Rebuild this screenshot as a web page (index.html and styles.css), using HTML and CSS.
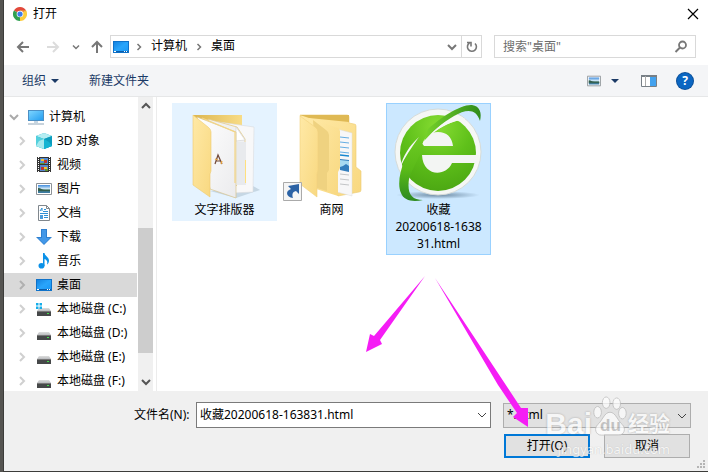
FILE: index.html
```html
<!DOCTYPE html>
<html lang="zh-CN">
<head>
<meta charset="utf-8">
<meta name="viewport" content="width=device-width, initial-scale=1">
<title>打开</title>
<link rel="stylesheet" href="styles.css">
</head>
<body>
<svg class="defs" aria-hidden="true">
  <defs>
    <linearGradient id="blue" x1="0" y1="0" x2="1" y2="1"><stop offset="0" stop-color="#1583e0"/><stop offset=".5" stop-color="#29a5fb"/><stop offset="1" stop-color="#1b98f5"/></linearGradient>
    <linearGradient id="screen" x1="0" y1="0" x2="1" y2="1"><stop offset="0" stop-color="#7cd4ff"/><stop offset="1" stop-color="#259ef0"/></linearGradient>
    <linearGradient id="sky" x1="0" y1="0" x2="0" y2="1"><stop offset="0" stop-color="#3f8bdd"/><stop offset=".5" stop-color="#dff1fa"/><stop offset=".6" stop-color="#3e6f62"/><stop offset="1" stop-color="#3d7fb0"/></linearGradient>
    <linearGradient id="fold" x1="0" y1="0" x2="1" y2="1"><stop offset="0" stop-color="#ffe9a6"/><stop offset="1" stop-color="#f8d880"/></linearGradient>
    <linearGradient id="back" x1="0" y1="0" x2="1" y2="0"><stop offset="0" stop-color="#dcb550"/><stop offset="1" stop-color="#f8dc86"/></linearGradient>
    <linearGradient id="paper" x1="0" y1="0" x2="1" y2="1"><stop offset="0" stop-color="#ffffff"/><stop offset="1" stop-color="#ebebed"/></linearGradient>
    <radialGradient id="green" cx=".5" cy=".15" r=".9"><stop offset="0" stop-color="#86dc32"/><stop offset=".5" stop-color="#5fc01a"/><stop offset="1" stop-color="#4aa512"/></radialGradient>
    <linearGradient id="tip" x1="0" y1="0" x2="1" y2="0"><stop offset="0" stop-color="#78d42a"/><stop offset="1" stop-color="#2f8c1c"/></linearGradient>
    <linearGradient id="blade" x1="0" y1="0" x2="0" y2="1"><stop offset="0" stop-color="#6cca22"/><stop offset=".5" stop-color="#5aba18"/><stop offset="1" stop-color="#2d8a20"/></linearGradient>
    <radialGradient id="shade"><stop offset="0" stop-color="#4e6c86" stop-opacity=".75"/><stop offset="1" stop-color="#4e6c86" stop-opacity="0"/></radialGradient>
    <linearGradient id="drivetop" x1="0" y1="0" x2="0" y2="1"><stop offset="0" stop-color="#dedede"/><stop offset="1" stop-color="#b9bbbe"/></linearGradient>
  </defs>
  <symbol id="chev" viewBox="0 0 16 16"><path d="M6 4l4 4-4 4" fill="none" stroke="currentColor" stroke-width="2"/></symbol>
  <symbol id="down" viewBox="0 0 16 16"><path d="M4 6l4 4 4-4" fill="none" stroke="currentColor" stroke-width="2"/></symbol>
  <symbol id="desk" viewBox="0 0 16 16"><path d="M0 2h16v12H0z" fill="#0f72c9"/><path d="M1 3h14v10H1z" fill="url(#blue)"/><path d="M1 12.500h14" stroke="#0d5ca8"/><path d="M1 12.500h2m8 0h1m1 0h1" stroke="#fff"/></symbol>
  <symbol id="photo" viewBox="0 0 16 16"><path d="M.5 2.500h15v11H.5z" fill="#fff" stroke="#8d9297"/><path d="M2 4h12v8H2z" fill="url(#sky)"/><path d="M2 7c3 0 4 2 7 2h5v1H2z" fill="#335d4b"/></symbol>
  <symbol id="drive" viewBox="0 0 16 16"><path d="M3 7h10l2 3H1z" fill="url(#drivetop)"/><path d="M1 10h14v5H1z" fill="#464849"/><path d="M1 10.500h14" stroke="#777"/><path d="M11 12h2v1h-2z" fill="#45df4d"/></symbol>
</svg>

<main class="window">
  <header class="title">
    <svg class="chrome" viewBox="0 0 16 16" aria-hidden="true"><path d="M8 8L1.070 4A8 8 0 0 1 14.930 4z" fill="#e2493b"/><path d="M8 8l6.930-4A8 8 0 0 1 8 16z" fill="#fccd3d"/><path d="M8 8v8A8 8 0 0 1 1.070 4z" fill="#30a050"/><path d="M8 4h6.930l.5 1H8z" fill="#f2b83a"/><circle cx="8" cy="8" r="3.800" fill="#fff"/><circle cx="8" cy="8" r="3" fill="#3d7eea"/></svg>
    <h1>打开</h1>
    <button class="plain close" aria-label="关闭"><svg viewBox="0 0 12 12"><path d="M1 1l10 10M11 1L1 11" fill="none" stroke="#000" stroke-width="1.200"/></svg></button>
  </header>

  <nav class="address-row" aria-label="地址">
    <button class="plain nav" aria-label="后退"><svg viewBox="0 0 16 16"><path d="M14 8H3M8 3L3 8l5 5" fill="none" stroke="#777" stroke-width="2"/></svg></button>
    <button class="plain nav forward" aria-label="前进"><svg viewBox="0 0 16 16"><path d="M2 8h11M8 3l5 5-5 5" fill="none" stroke="#dcdcdc" stroke-width="2"/></svg></button>
    <button class="plain recent" aria-label="最近"><svg viewBox="0 0 16 16"><use href="#down"/></svg></button>
    <button class="plain nav" aria-label="上移"><svg viewBox="0 0 16 16"><path d="M8 14V3M3 8l5-5 5 5" fill="none" stroke="#777" stroke-width="2"/></svg></button>
    <div class="address">
      <svg class="icon" viewBox="0 0 16 16" aria-hidden="true"><use href="#desk"/></svg>
      <svg class="sep" viewBox="0 0 16 16" aria-hidden="true"><use href="#chev"/></svg>
      <a href="#computer">计算机</a>
      <svg class="sep" viewBox="0 0 16 16" aria-hidden="true"><use href="#chev"/></svg>
      <a href="#desktop">桌面</a>
      <button class="plain history" aria-label="历史"><svg viewBox="0 0 16 16"><use href="#down"/></svg></button>
      <button class="plain refresh" aria-label="刷新"><svg viewBox="0 0 16 16"><path d="M11 4.500A4.500 4.500 0 1 1 5.500 4M3 3.500h4v4" fill="none" stroke="#777" stroke-width="1.600"/></svg></button>
    </div>
    <div class="search">
      <input type="search" aria-label="搜索" placeholder="搜索&quot;桌面&quot;">
      <svg viewBox="0 0 16 16" aria-hidden="true"><circle cx="9.500" cy="6" r="3.500" fill="none" stroke="#777" stroke-width="1.800"/><path d="M7 8.500L2.500 13" stroke="#777" stroke-width="2"/></svg>
    </div>
  </nav>

  <div class="toolbar">
    <button class="plain organize">组织 <svg viewBox="0 0 8 4" aria-hidden="true"><path d="M0 0h8L4 4z" fill="#1b3a66"/></svg></button>
    <button class="plain">新建文件夹</button>
    <span class="tools">
      <button class="plain view" aria-label="更改视图"><svg class="view-icon" viewBox="0 0 16 16"><use href="#photo"/></svg><svg class="caret" viewBox="0 0 8 4"><path d="M0 0h8L4 4z" fill="#1b3a66"/></svg></button>
      <button class="plain" aria-label="预览窗格"><svg viewBox="0 0 16 16"><path d="M.5 2.500h15v11H.5z" fill="#fff" stroke="#777f86"/><path d="M0 2h16v2H0z" fill="#777f86"/><path d="M4.500 3v10" stroke="#aaa"/><path d="M9 4h6v9H9z" fill="#43a2ef"/></svg></button>
      <button class="plain" aria-label="帮助"><span class="help">?</span></button>
    </span>
  </div>

  <div class="content">
    <nav class="tree" aria-label="文件夹">
      <a class="root" href="#computer"><svg class="arrow" viewBox="0 0 16 16"><use href="#down"/></svg><svg class="icon" viewBox="0 0 16 16"><path d="M0 1h16v11H0z" fill="#4c8fc4"/><path d="M1 2h14v9H1z" fill="url(#screen)"/><path d="M6 12h4v2H6z" fill="#c7d6e2"/><path d="M0 15h16" stroke="#8fa6b9"/></svg>计算机</a>
      <a href="#objects"><svg class="arrow" viewBox="0 0 16 16"><use href="#chev"/></svg><svg class="icon" viewBox="0 0 16 16"><path d="M0 3l8-3 8 3v10l-8 3-8-3z" fill="#20b6cf"/><path d="M0 3l8-3 8 3-8 3z" fill="#b5edf2"/><path d="M0 3l8 3v10l-8-3z" fill="#53d0dd"/><path d="M8 6l8-3v10l-8 3z" fill="#0c9cbd"/><path d="M3 8l5-2v10l-8-3z" fill="#a5e9ee"/><path d="M8 6l5 3 3 4-8 3z" fill="#13b4d2"/></svg>3D 对象</a>
      <a href="#videos"><svg class="arrow" viewBox="0 0 16 16"><use href="#chev"/></svg><svg class="icon" viewBox="0 0 16 16"><path d="M1 0h14v15H1z" fill="#333"/><path d="M2.500 0v15M13.500 0v15" stroke="#fff" stroke-dasharray="1 1"/><path d="M4 1h8v6H4z" fill="#518bd1"/><path d="M4 8h8v6H4z" fill="#5587ce"/><path d="M5 2h3v2H5zm3 8h3v2H8z" fill="#f0c12f"/><path d="M8 3h3v3H8zM5 10h3v3H5z" fill="#be3432"/><path d="M4 6h5v1H4zm5 6h3v2H9z" fill="#5f9433"/></svg>视频</a>
      <a href="#pictures"><svg class="arrow" viewBox="0 0 16 16"><use href="#chev"/></svg><svg class="icon" viewBox="0 0 16 16"><use href="#photo"/></svg>图片</a>
      <a href="#documents"><svg class="arrow" viewBox="0 0 16 16"><use href="#chev"/></svg><svg class="icon" viewBox="0 0 16 16"><path d="M2.500.5h8l3 3v12h-11z" fill="#fff" stroke="#80878d"/><path d="M10.500.5v3h3" fill="none" stroke="#80878d"/><path d="M4 6l2-3v3m2-1.500h2M7 6.500h5M4 8.500h8m-4 2h4m-4 2h4" fill="none" stroke="#2f90d5"/><path d="M4 10h3v4H4z" fill="#4a9cdb"/></svg>文档</a>
      <a href="#downloads"><svg class="arrow" viewBox="0 0 16 16"><use href="#chev"/></svg><svg class="icon" viewBox="0 0 16 16"><path d="M5 0h6v8h5l-8 8-8-8h5z" fill="#2f80d0"/><path d="M6 1h4v8h4l-6 6-6-6h4z" fill="#4398e8"/></svg>下载</a>
      <a href="#music"><svg class="arrow" viewBox="0 0 16 16"><use href="#chev"/></svg><svg class="icon" viewBox="0 0 16 16"><ellipse cx="5.500" cy="12.700" rx="3" ry="2.800" fill="#0b91e8"/><path d="M7 0h1.500c.3 3 4.500 4 4.500 7.500 0 2-1 3.500-2 4 .8-3 0-4.500-2.500-5.500v7H7z" fill="#0b91e8"/></svg>音乐</a>
      <a class="selected" href="#desktop" aria-current="page"><svg class="arrow" viewBox="0 0 16 16"><use href="#chev"/></svg><svg class="icon" viewBox="0 0 16 16"><use href="#desk"/></svg>桌面</a>
      <a href="#c"><svg class="arrow" viewBox="0 0 16 16"><use href="#chev"/></svg><svg class="icon" viewBox="0 0 16 16"><use href="#drive"/><path d="M0 2h2.500v2.500H0zm3.500 0H6v2.500H3.500zM0 5.500h2.500V8H0zm3.500 0H6V8H3.500z" fill="#16aeea"/></svg>本地磁盘 (C:)</a>
      <a href="#d"><svg class="arrow" viewBox="0 0 16 16"><use href="#chev"/></svg><svg class="icon" viewBox="0 0 16 16"><use href="#drive"/></svg>本地磁盘 (D:)</a>
      <a href="#e"><svg class="arrow" viewBox="0 0 16 16"><use href="#chev"/></svg><svg class="icon" viewBox="0 0 16 16"><use href="#drive"/></svg>本地磁盘 (E:)</a>
      <a href="#f"><svg class="arrow" viewBox="0 0 16 16"><use href="#chev"/></svg><svg class="icon" viewBox="0 0 16 16"><use href="#drive"/></svg>本地磁盘 (F:)</a>
    </nav>
    <div class="scrollbar">
      <button class="plain" aria-label="向上滚动"><svg viewBox="0 0 16 16"><path d="M4 10l4-4 4 4" fill="none" stroke="#555" stroke-width="2"/></svg></button>
      <span class="track"></span>
      <span class="thumb"></span>
      <span class="track end"></span>
      <button class="plain" aria-label="向下滚动"><svg viewBox="0 0 16 16"><use href="#down"/></svg></button>
    </div>
    <section class="files" aria-label="文件">
      <button class="file hover">
        <svg viewBox="0 0 105 98" aria-hidden="true">
          <path d="M38 88l26 7 24-8-7-4z" fill="#8ca2b3" opacity=".35"/>
          <path d="M21 12h49v62H30z" fill="url(#back)"/>
          <path d="M33 17l49 7-1 65-20 1z" fill="#f8f8f9" stroke="#dadcdf" stroke-width=".6"/>
          <path d="M36 16l29 8 8 12v38l-9 9z" fill="#f0f1f3" stroke="#e4ca86" stroke-width=".8"/>
          <path d="M64 24l9 13-9 1z" fill="#fff" stroke="#d0d0d0" stroke-width=".6"/>
          <path d="M65 39h9v43h-9z" fill="#e8eaed"/><path d="M73.500 57v23" stroke="#ffe07e"/>
          <path d="M25 14l39 15v66l-26-9z" fill="url(#paper)" stroke="#d9c48d" stroke-width=".7"/>
          <path d="M30 15l33 14v51" fill="none" stroke="#f3d584" stroke-width="1.200"/>
          <path d="M43 61l3-9 4 9m-6-3h5" fill="none" stroke="#714838" stroke-width="1.200"/><path d="M43 56l3 1m3 4l1-3" stroke="#e6a03b" stroke-width="1.200"/>
          <path d="M21 12l15 12q3 2 3 5v39l-1 3v23L21 82z" fill="url(#fold)" stroke="#efcb70" stroke-width=".6"/>
        </svg>
        <span>文字排版器</span>
      </button>
      <button class="file">
        <svg viewBox="0 0 105 98" aria-hidden="true">
          <path d="M21 12h47q2 0 2 2v6l5 1q2 0 2 2v41l5 4v19q0 2-2 2l-21 4z" fill="url(#fold)" stroke="#edcb70" stroke-width=".6"/>
          <path d="M21 12h49v7L30 15z" fill="#dfb954"/>
          <path d="M58 26l15 4v63l-15-4z" fill="#f7f7f8" stroke="#ddd" stroke-width=".5"/>
          <path d="M61 34l9 1m-9 4l9 1m-9 4l9 1m-9 4l9 1" stroke="#64ade3"/><path d="M61 52l9 1" stroke="#1888d0" stroke-width="1.400"/>
          <path d="M61 56l9 1v12l-9-2z" fill="#337ebd"/><path d="M61 57l9 1v5l-3-2-3 2-3 1z" fill="#a7daf1"/>
          <path d="M61 71l9 1m-9 4l9 1m-9 4l9 1" stroke="#b5b7ba" stroke-width=".8"/>
          <path d="M30 15l29 10q2 1 2 3v37l-2 4v24l-22-7z" fill="url(#fold)"/>
          <path d="M34 17l13 10q3 2 3 5v35l-2 3v18l-10-3z" fill="#efd280"/>
          <path d="M21 13l15 11q3 2 3 5v38l-1 4v23L21 81z" fill="url(#fold)" stroke="#f2d27d" stroke-width=".6"/>
          <path d="M4.500 79.500h18v18h-18z" fill="#f5f5f5" stroke="#aaa"/><path d="M9 83l11-2v10l-3-3c-4 1-4 4-3 7-7-1-8-7-2-9z" fill="#2b62a5"/>
        </svg>
        <span>商网</span>
      </button>
      <button class="file chosen">
        <svg viewBox="0 0 105 98" aria-hidden="true">
          <ellipse cx="52" cy="92" rx="42" ry="4" fill="url(#shade)"/>
          <circle cx="52" cy="49" r="43" fill="#f5f7f5" stroke="#d7dcd9"/>
          <circle cx="52" cy="50" r="38" fill="url(#green)"/>
          <path d="M36 43Q39 29 52 29Q65 29 67 43zM36 52H93V60H66C60 74 37 74 36 52z" fill="#f3f5f3"/>
          <path d="M36 43C38 34 55 17 69 10L79 16C65 18 55 24 47 30L40 38z" fill="#f5f7f5"/>
          <path d="M42 26C54 15 75 1 86 2C94 3 96 10 94 18C90 5 80 6 68 13C56 20 46 29 38 38z" fill="url(#tip)"/>
          <path d="M45 31C53 23 64 15 74 13L79 16C65 18 55 24 47 30z" fill="#f5f7f5"/>
          <path d="M32 35C19 50 9 77 15 90C18 98 27 99 37 97C25 97 21 90 23 76L26 68L38 43z" fill="url(#blade)"/>
          <path d="M33 34C23 43 17 53 14 65C19 54 25 45 33 34z" fill="#f5f7f5"/>
        </svg>
        <span>收藏<br>20200618-163831.html</span>
      </button>
    </section>
  </div>

  <form class="footer">
    <div class="fields">
      <label for="filename">文件名(N):</label>
      <div class="combo"><input id="filename" type="text" value="收藏20200618-163831.html"><button class="plain" type="button" aria-label="以前的文件名"><svg viewBox="0 0 16 16"><path d="M4 6l4 4 4-4" fill="none" stroke="#444"/></svg></button></div>
      <div class="type"><select aria-label="文件类型"><option>*.html</option></select><svg viewBox="0 0 16 16" aria-hidden="true"><path d="M4 6l4 4 4-4" fill="none" stroke="#444"/></svg></div>
    </div>
    <div class="actions">
      <button class="action primary" type="button">打开(O)</button>
      <button class="action" type="button">取消</button>
    </div>
    <svg class="grip" viewBox="0 0 8 8" aria-hidden="true"><path d="M6 0h2v2H6zM3 3h2v2H3zm3 0h2v2H6zM0 6h2v2H0zm3 0h2v2H3zm3 0h2v2H6z" fill="#b5b5b5"/></svg>
  </form>

  <svg class="pointers" viewBox="0 0 170 160" aria-hidden="true"><path d="M65 6L20 70l2 4-16 8 4-18 4 2zM75 8l86 130h7l0 19-15-10 4-4L138 115z" fill="#f51df5"/></svg>
  <div class="watermark">
    <div class="brand"><span>Bai</span><span class="paw"><svg viewBox="0 0 36 44" aria-hidden="true"><g fill="#fff" stroke="#b8b8b8" stroke-width="1"><ellipse cx="5" cy="17" rx="4" ry="6"/><ellipse cx="14" cy="7" rx="4" ry="6"/><ellipse cx="25" cy="8" rx="4" ry="6"/><ellipse cx="31" cy="18" rx="4" ry="6"/><path d="M18 17c6 0 8 9 13 13 4 4 2 11-4 11H9c-6 0-8-7-4-11 5-4 7-13 13-13z"/></g></svg><b>du</b></span><span class="zh">经验</span></div>
    <small>jingyan.baidu.com</small>
  </div>
</main>
</body>
</html>
```
FILE: styles.css
```css
* { box-sizing: border-box; }
body { margin: 0; font: 12px/16px "Noto Sans", "Noto Sans CJK SC", sans-serif; color: #000; background: #555451; }
svg { display: block; width: 16px; height: 16px; flex: none; }
a { color: inherit; text-decoration: none; }
button, input, select { font: inherit; color: inherit; margin: 0; }
.defs { position: absolute; width: 0; height: 0; }
.plain { display: flex; align-items: center; justify-content: center; padding: 0; border: 0; background: none; }

.window { position: relative; display: flex; flex-direction: column; height: 100vh; margin-left: 3px; border-left: 1px solid #3c3c3a; border-bottom: 1px solid #3c3c3a; background: #fff; }

.title { display: flex; align-items: center; height: 28px; padding: 0 9px; gap: 6px; }
.title h1 { flex: 1; margin: 0; font-size: 12px; font-weight: 400; }
.chrome { width: 14px; height: 14px; }
.close svg { width: 12px; height: 12px; }

.address-row { display: flex; align-items: center; padding: 7px 12px 7px 11px; }
.nav { width: 16px; }
.forward { margin-left: 14px; }
.recent { margin: 0 5px 0 7px; color: #777; }
.recent svg { width: 12px; height: 12px; margin: 0 2px; }
.address { display: flex; flex: 1; align-items: center; height: 23px; margin-left: 5px; padding-left: 2px; border: 1px solid #d9d9d9; }
.address a { padding-bottom: 2px; }
.sep { width: 12px; height: 12px; margin: 0 6px 0 4px; color: #777; }
.address .icon + .sep + a { margin-right: 2px; }
.history { width: 18px; margin-left: auto; color: #777; }
.refresh { width: 20px; height: 21px; border-left: 1px solid #d9d9d9; }
.search { display: flex; align-items: center; width: 202px; height: 23px; margin-left: 12px; padding: 0 6px 0 8px; border: 1px solid #d9d9d9; }
.search input { flex: 1; min-width: 0; padding: 0; border: 0; outline: 0; background: none; }
.search input::placeholder { color: #6d6d6d; opacity: 1; }

.toolbar { display: flex; align-items: center; height: 32px; padding: 0 15px 0 18px; gap: 30px; border-bottom: 1px solid #e6e7e8; background: #f4f5f7; color: #1b3a66; }
.organize { gap: 5px; }
.organize svg, .caret { width: 8px; height: 4px; }
.tools { display: flex; align-items: center; gap: 20px; margin-left: auto; }
.view { gap: 10px; margin-right: 2px; }
.view-icon { width: 14px; height: 14px; }
.help { width: 16px; height: 16px; border-radius: 8px; background: #0b66c2; box-shadow: 0 0 0 1px #0b4f98; color: #fff; font-weight: 700; }

.content { display: flex; flex: 1; min-height: 0; }
.tree { width: 133px; padding-top: 8px; overflow: hidden; }
.tree a { display: flex; align-items: center; height: 24px; padding-left: 10px; white-space: nowrap; }
.tree .root { padding-left: 2px; }
.tree .arrow { margin-right: 6px; color: #d0d0d0; }
.tree .root .arrow { color: #aaa; }
.tree .icon { margin-right: 5px; }
.tree .selected { background: #d9d9d9; }
.tree .selected .arrow { color: #b0b0b0; }
.scrollbar { display: flex; flex-direction: column; width: 20px; padding: 0 3px 0 1px; border-right: 1px solid #ececec; background: #f0f0f0 content-box; color: #555; }
.scrollbar button { height: 18px; }
.track { flex: 113; }
.track.end { flex: 20; }
.thumb { flex: 125; background: #cdcdcd; }
.files { display: flex; flex: 1; align-items: flex-start; gap: 2px; padding: 6px 15px; }
.file { display: flex; flex-direction: column; width: 105px; padding: 0 0 3px; border: 0; background: none; line-height: 17px; text-align: center; }
.file svg { width: 105px; height: 98px; }
.file span { align-self: stretch; padding: 0 7px; word-break: break-all; }
.hover { background: #e5f3ff; }
.chosen { background: #cce8ff; box-shadow: inset 0 0 0 1px #99d1ff; }

.footer { position: relative; height: 80px; padding: 11px 17px 0 130px; background: #f0f0f0; }
.fields, .actions { display: flex; align-items: center; }
.combo { display: flex; flex: 1; height: 26px; margin: 0 12px 0 5px; border: 1px solid #7a7a7a; background: #fff; }
.fields label { width: 57px; white-space: nowrap; }
.combo input { flex: 1; min-width: 0; padding: 0 3px; border: 0; outline: 0; background: none; }
.combo button { width: 17px; }
.type { position: relative; width: 188px; }
.type select { width: 100%; height: 25px; padding: 0 3px; border: 1px solid #adadad; border-radius: 0; background: #e1e1e1; appearance: none; }
.type svg { position: absolute; right: 1px; top: 5px; pointer-events: none; }
.actions { justify-content: flex-end; gap: 14px; margin: 6px 1px 0 0; }
.action { width: 86px; height: 24px; padding: 0; border: 1px solid #adadad; background: #e1e1e1; }
.primary { border: 2px solid #0078d7; }
.grip { position: absolute; right: 3px; bottom: 3px; width: 8px; height: 8px; }

.pointers { position: absolute; left: 356px; top: 270px; width: 170px; height: 160px; pointer-events: none; }
.watermark { position: absolute; right: 38px; bottom: 15px; color: #fff; opacity: 0.7; pointer-events: none; text-shadow: 0 0 2px #888; }
.brand { display: flex; align-items: flex-end; justify-content: flex-end; height: 46px; padding-bottom: 4px; font: 700 30px/28px "Liberation Sans", "Noto Sans CJK SC", sans-serif; }
.paw { position: relative; width: 36px; height: 42px; }
.paw svg { width: 36px; height: 42px; }
.paw b { position: absolute; left: 8px; bottom: 3px; color: #b5b5b5; font-size: 17px; line-height: 18px; text-shadow: none; }
.brand .zh { font-size: 21px; }
.watermark small { display: block; font: 13px/14px "Noto Sans", sans-serif; text-align: right; text-shadow: 0 0 1px #aaa; }
```
